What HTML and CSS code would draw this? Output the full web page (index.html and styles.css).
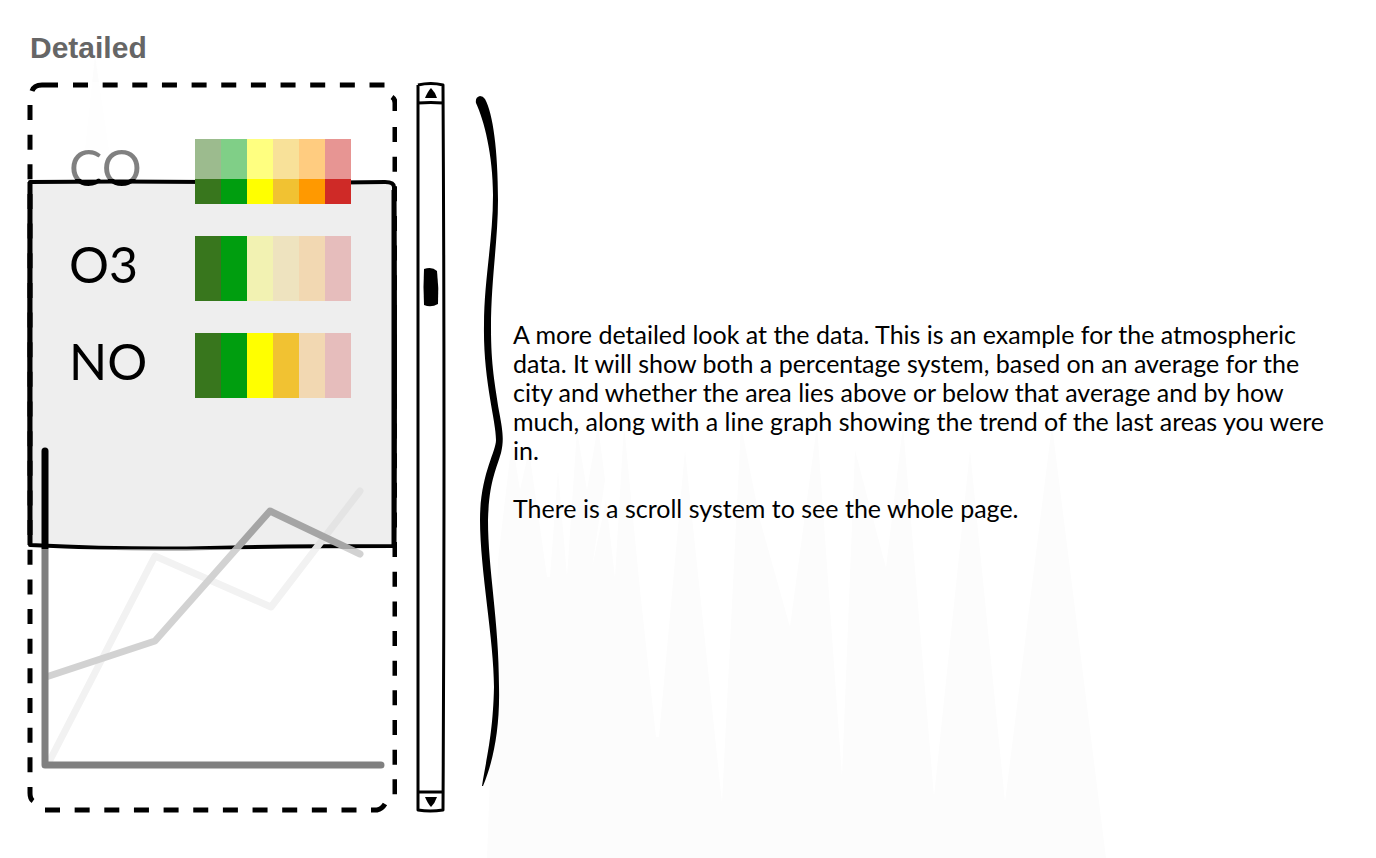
FILE: index.html
```html
<!DOCTYPE html>
<html lang="en">
<head>
<meta charset="utf-8">
<title>Detailed</title>
<link rel="stylesheet" href="styles.css">
</head>
<body>
<svg class="backdrop" viewBox="0 0 1376 858" aria-hidden="true">
  <path d="M85 150L95 56L109 150Z"/>
  <path d="M487 858L498 560L512 440L520 490L529 450L547 577H550L558 470L567 577L577 430L587 490L598 425L605 480L592 568L606 500L615 578L624 425L640 590L656 737H659L685 450L722 803L741 425L760 520L790 627L817 425L842 777L855 450L886 568L903 425L934 797L970 450L1005 802L1052 425L1106 858Z"/>
</svg>
<h1 class="title">Detailed</h1>
<main class="layout">
  <section class="page" aria-label="Atmospheric data">
    <svg class="layer" viewBox="27 82 370 731" aria-hidden="true">
      <path class="device" d="M30 182Q120 181 210 182T385 182Q394 182 394 187Q396 360 394 546Q290 546 210 548T30 545Q29 360 30 182Z"/>
      <path class="outline" d="M30 182V545M394 190V546"/>
    </svg>
    <ul class="readings">
      <li class="reading"><span class="gas">CO</span><span class="scale"><i class="band moss"></i><i class="band green"></i><i class="band yellow"></i><i class="band gold"></i><i class="band orange"></i><i class="band red"></i></span></li>
      <li class="reading"><span class="gas">O3</span><span class="scale"><i class="band moss"></i><i class="band green"></i><i class="band yellow off"></i><i class="band gold off"></i><i class="band orange off"></i><i class="band red off"></i></span></li>
      <li class="reading"><span class="gas">NO</span><span class="scale"><i class="band moss"></i><i class="band green"></i><i class="band yellow"></i><i class="band gold"></i><i class="band orange off"></i><i class="band red off"></i></span></li>
    </ul>
    <svg class="chart" viewBox="41 447 344 322" role="img" aria-label="Trend line graph">
      <path class="trend pale" d="M49 762L155 556L271 607L360 491"/>
      <path class="trend" d="M46 677L155 641L270 511L360 554"/>
      <path class="axis" d="M45 451V765H381"/>
    </svg>
    <div class="fade fade-top"></div>
    <div class="fade fade-bottom"></div>
    <svg class="layer" viewBox="27 82 370 731" aria-hidden="true">
      <g class="outline">
        <path d="M32 91Q34 85 42 85H58M392 97Q395 99 395 103V111M30 787V793Q30 799 33 801M371 810H377Q382 809 385 804"/>
        <path class="dashed" d="M73 85H386"/>
        <path class="dashed" d="M395 127V795"/>
        <path class="dashed" d="M30 105V773"/>
        <path class="dashed" d="M45 810H357"/>
      </g>
    </svg>
  </section>
  <div class="scrollbar">
    <svg class="layer" viewBox="416 82 30 731" aria-hidden="true">
      <path class="rail" d="M418 85Q431 82 443 85Q445 450 443 810Q430 812 418 810Q419 450 418 85M418 103Q431 102 443 103M418 792H443"/>
      <path d="M424 269Q432 266 437 271Q439 288 438 304Q431 308 424 305Q423 287 424 269Z"/>
    </svg>
    <button class="arrow" type="button" aria-label="Scroll up"><svg viewBox="0 0 14 12"><path d="M1 11Q4 4 7 1Q11 5 13 11Z"/></svg></button>
    <button class="arrow" type="button" aria-label="Scroll down"><svg viewBox="0 0 14 12"><path d="M1 1H13Q11 7 7 11Q4 8 1 1Z"/></svg></button>
  </div>
  <svg class="brace" viewBox="475 82 29 731" aria-hidden="true">
    <path d="M476 103Q475 97 480 96Q483 96 485 99C493 114 498 150 498 200C498 240 491 280 491 328C491 365 495 385 499 411C503 432 504 440 501 453C496 470 489 483 488 520C488 570 499 620 499 687C500 730 493 762 483 786H482C486 760 493 735 494 687C494 640 480 570 480 520C480 475 496 452 496 440C496 420 483 380 484 325C484 280 493 240 493 195C493 155 484 120 476 103Z"/>
  </svg>
  <div class="notes">
    <p>A more detailed look at the data. This is an example for the atmospheric data. It will show both a percentage system, based on an average for the city and whether the area lies above or below that average and by how much, along with a line graph showing the trend of the last areas you were in.</p>
    <p>There is a scroll system to see the whole page.</p>
  </div>
</main>
</body>
</html>
```
FILE: styles.css
```css
body {
  position: relative;
  margin: 0;
  padding: 32px 40px 45px 27px;
  background: #fff;
  color: #000;
  font-family: Lato, "Noto Sans", sans-serif;
}

.backdrop {
  position: absolute;
  top: 0;
  left: 0;
  z-index: -1;
  width: 1376px;
  fill: #fcfcfc;
}

.title {
  margin: 0 0 18px 3px;
  color: #666;
  font: bold 30px/32px "Liberation Sans", Arial, sans-serif;
}

.layout {
  display: flex;
  align-items: flex-start;
}

.page {
  position: relative;
  box-sizing: border-box;
  flex: none;
  width: 370px;
  padding: 57px 12px 44px 14px;
}

.layer {
  position: absolute;
  top: 0;
  left: 0;
  width: 100%;
  height: 100%;
}

.device {
  fill: #eee;
  stroke: #000;
  stroke-width: 4;
  stroke-linejoin: round;
}

.readings {
  position: relative;
  display: grid;
  gap: 32px;
  margin: 0 0 49px;
  padding: 0 0 0 28px;
  list-style: none;
}

.reading {
  display: grid;
  grid-template-columns: 126px 156px;
}

.gas {
  font-size: 50px;
  line-height: 56px;
}

.scale {
  display: grid;
  grid-template-columns: repeat(6, 1fr);
  height: 65px;
}

.moss { background: #38761d; }
.green { background: #009e0f; }
.yellow { background: #ff0; }
.gold { background: #f1c232; }
.orange { background: #f90; }
.red { background: #cf2a27; }
.off { opacity: 0.25; }

.chart {
  position: relative;
  display: block;
  width: 100%;
  fill: none;
}

.trend {
  stroke: #a5a5a5;
  stroke-width: 7;
  stroke-linecap: round;
  stroke-linejoin: round;
}

.pale {
  stroke: #e4e4e4;
}

.axis {
  stroke: #000;
  stroke-width: 7;
  stroke-linecap: round;
  stroke-linejoin: round;
}

.fade {
  position: absolute;
  right: 0;
  left: 0;
  background: rgba(255, 255, 255, 0.5);
}

.fade-top {
  top: 0;
  height: 97px;
}

.fade-bottom {
  top: 467px;
  bottom: 0;
}

.outline {
  fill: none;
  stroke: #000;
  stroke-width: 5;
}

.dashed {
  stroke-dasharray: 15 14.65;
}

.scrollbar {
  position: relative;
  display: flex;
  flex: none;
  flex-direction: column;
  align-self: stretch;
  justify-content: space-between;
  width: 30px;
  margin-left: 19px;
}

.rail {
  fill: none;
  stroke: #000;
  stroke-width: 3;
  stroke-linejoin: round;
}

.arrow {
  position: relative;
  display: grid;
  place-items: center;
  width: 30px;
  height: 22px;
  padding: 0;
  border: 0;
  background: none;
}

.arrow svg {
  width: 14px;
}

.brace {
  flex: none;
  width: 29px;
  margin-left: 29px;
}

.notes {
  flex: 1;
  max-width: 828px;
  margin: 238px 0 0 9px;
  font-size: 25px;
  line-height: 29px;
}

.notes p {
  margin: 0 0 29px;
}
```
